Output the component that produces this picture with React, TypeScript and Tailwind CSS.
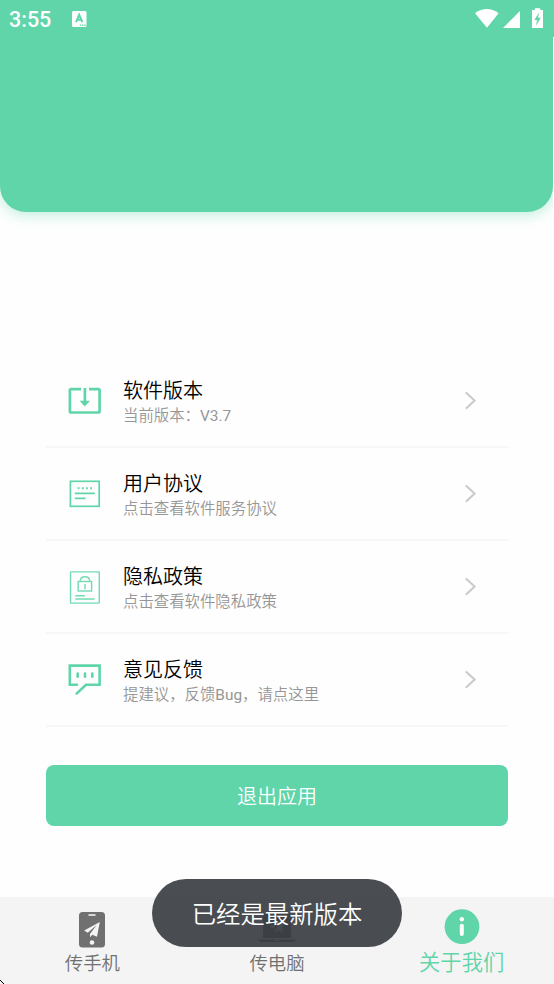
import type { ReactNode } from 'react';

const GREEN = '#60d5a9';

function VersionIcon() {
  return (
    <svg width="34" height="34" viewBox="0 0 34 34" fill="none" stroke={GREEN} strokeWidth="2.7">
      <path d="M13 5.1H3.1Q1.9 5.1 1.9 6.3V27.3Q1.9 28.5 3.1 28.5H30.4Q31.6 28.5 31.6 27.3V6.3Q31.6 5.1 30.4 5.1H21" />
      <path d="M16.9 4V18" />
      <path d="M11.6 16.8H22L16.8 22.4Z" fill={GREEN} stroke="none" />
    </svg>
  );
}

function AgreementIcon() {
  return (
    <svg width="34" height="34" viewBox="0 0 34 34" fill="none" stroke={GREEN} strokeWidth="1.7">
      <rect x="2.4" y="4.3" width="28.8" height="25" />
      <path d="M9.7 11.2h1.8M13.9 11.2h1.8M18 11.2h1.8M22.2 11.2h1.8" strokeWidth="2" />
      <path d="M6.8 16.4H26.8M6.8 21.4H17.5" strokeWidth="1.9" />
    </svg>
  );
}

function PrivacyIcon() {
  return (
    <svg width="34" height="34" viewBox="0 0 34 34" fill="none" stroke="#72dbb4" strokeWidth="1.4">
      <rect x="2.5" y="1.9" width="28.8" height="31.2" rx="0.6" />
      <rect x="10.2" y="11.5" width="13.4" height="9.5" />
      <path d="M12.2 11.5V10.5Q12.8 6.7 17 6.7T21.7 10.5V11.5M17 13.9V19.2" />
      <path d="M7.3 25.7H17M7.3 29H26.6" strokeWidth="1.5" />
    </svg>
  );
}

function FeedbackIcon() {
  return (
    <svg width="34" height="34" viewBox="0 0 34 34" fill="none" stroke={GREEN} strokeWidth="2.6" strokeLinecap="round">
      <path d="M9 21.7H1.8V2.6H31.6V21.7H18L8.6 30.6" />
      <path d="M9.7 10.5v3.3M17 10.5v3.3M24.3 10.5v3.3" />
    </svg>
  );
}

interface RowProps {
  icon: ReactNode;
  title: string;
  detail: ReactNode;
}

const rows: RowProps[] = [
  { icon: <VersionIcon />, title: '软件版本', detail: <>当前版本：<span className="font-normal">V3.7</span></> },
  { icon: <AgreementIcon />, title: '用户协议', detail: '点击查看软件服务协议' },
  { icon: <PrivacyIcon />, title: '隐私政策', detail: '点击查看软件隐私政策' },
  { icon: <FeedbackIcon />, title: '意见反馈', detail: <>提建议，反馈<span className="font-normal">Bug</span>，请点这里</> },
];

function Row({ icon, title, detail }: RowProps) {
  return (
    <li className="flex h-[93px] items-center border-b-2 border-[#f7f7f7] pr-8 pl-[22px]">
      {icon}
      <div className="ml-[21px] flex-1 pt-1.5 whitespace-nowrap">
        <div className="text-[20px] leading-[25px] text-black">{title}</div>
        <div className="text-[15.4px] leading-[24px] text-[#969696]">{detail}</div>
      </div>
      <svg width="12" height="18" viewBox="0 0 12 18" fill="none" stroke="#cbcbcb" strokeWidth="2.1">
        <path d="M1.8 .4L10.6 8.6L1.8 16.8" />
      </svg>
    </li>
  );
}

function StatusBar() {
  return (
    <div className="flex h-[37px] items-center bg-[#60d5a9] pr-2.5 pl-[9px] text-white">
      <span className="w-[63px] pt-[3px] font-['Roboto',sans-serif] text-[21.5px] leading-none font-medium">3:55</span>
      <svg width="15" height="16" viewBox="0 0 15 16">
        <rect width="14.5" height="16" rx="1.5" fill="white" />
        <path d="M4 11.2L7.2 3.8L10.4 11.2M5.2 8.7H9.2" fill="none" stroke={GREEN} strokeWidth="2" />
        <path d="M7.8 14.2h1.5M10 14.2h1.5M12.2 14.2h1.5" stroke={GREEN} strokeWidth="1.3" />
      </svg>
      <svg className="ml-auto" width="69" height="22" viewBox="0 0 69 22" fill="white">
        <path d="M0 5.2Q11.8-3 23.6 5.2L12 19.8Z" />
        <path d="M45 3V20H28Z" />
        <path d="M59.8 .3H65.2V2.1H68V20.1H57V2.1H59.8Z" />
        <path d="M64 4.5L59.4 11.9H62.1L61 17.8L65.8 9.7H63.1Z" fill={GREEN} />
      </svg>
    </div>
  );
}

function PhoneIcon() {
  return (
    <svg width="26" height="36" viewBox="0 0 26 36">
      <rect width="26" height="35.5" rx="3.5" fill="#707070" />
      <path d="M9.5 3H16.5" stroke="#f4f4f4" strokeWidth="1.6" />
      <path d="M20.8 10L5.2 18.4L8.7 20.8L17.6 13L11 22V25.2L13.3 22.8L18 24.7Z" fill="#f4f4f4" />
      <circle cx="13" cy="30.5" r="2.3" fill="#f4f4f4" />
    </svg>
  );
}

function LaptopIcon() {
  return (
    <svg width="38" height="36" viewBox="0 0 38 36">
      <path d="M5 31V9Q5 7 7 7H31Q33 7 33 9V31Z" fill="#707070" />
      <path d="M0 32.5H38L35.5 35H2.5Z" fill="#707070" />
      <path d="M26.5 11L11.5 19.3L15 21.4L23.4 13.8L17 23V26L19.5 23.5L24 25.3Z" fill="#c8c8c8" />
      <path d="M17 33.4H21" stroke="#f4f4f4" strokeWidth="1" />
    </svg>
  );
}

export default function App() {
  return (
    <div className="relative flex h-[984px] w-[554px] flex-col overflow-hidden bg-[#fefefe] font-['Roboto','Noto_Sans_CJK_SC',sans-serif] font-[350]">
      <StatusBar />
      <header className="mr-px h-[175px] rounded-b-[26px] bg-[#60d5a9] shadow-[0_3px_14px_rgba(97,215,171,0.4)] [clip-path:inset(0_0_-24px_0)]" />
      <main className="mt-[143px] flex-1 px-[46px]">
        <ul>
          {rows.map((row) => (
            <Row key={row.title} {...row} />
          ))}
        </ul>
        <button className="mt-[38px] h-[61px] w-full rounded-[8px] bg-[#60d5a9] pt-[3px] text-[20px] text-white">退出应用</button>
      </main>
      <nav className="grid h-[87px] grid-cols-3 bg-[#f4f4f4] text-[18.4px] leading-[26px] text-[#707070]">
        <div className="flex flex-col items-center pt-[15px]">
          <PhoneIcon />
          <span className="mt-[3px]">传手机</span>
        </div>
        <div className="flex flex-col items-center pt-[10px]">
          <LaptopIcon />
          <span className="mt-[8px]">传电脑</span>
        </div>
        <div className="flex flex-col items-center pt-[12px] text-[21.3px] text-[#60d5a9]">
          <svg width="36" height="36" viewBox="0 0 36 36">
            <circle cx="18" cy="17.7" r="17.4" fill={GREEN} />
            <circle cx="17.8" cy="10.3" r="2.2" fill="white" />
            <path d="M17.8 16.8V25" stroke="white" strokeWidth="4" strokeLinecap="round" />
          </svg>
          <span className="mt-[5px]">关于我们</span>
        </div>
      </nav>
      <div className="absolute top-[879px] left-[152px] flex h-[68px] w-[250px] items-center justify-center rounded-full bg-[#363b3f]/90 pt-[5px] text-[24.4px] text-white">
        已经是最新版本
      </div>
      <svg className="absolute bottom-0 left-0" width="4" height="4" viewBox="0 0 4 4" shapeRendering="crispEdges">
        <path d="M0 0h1v1h1v1h1v1h1v1h-1v-1h-1v-1h-1v-1h-1z" fill="black" />
      </svg>
    </div>
  );
}
